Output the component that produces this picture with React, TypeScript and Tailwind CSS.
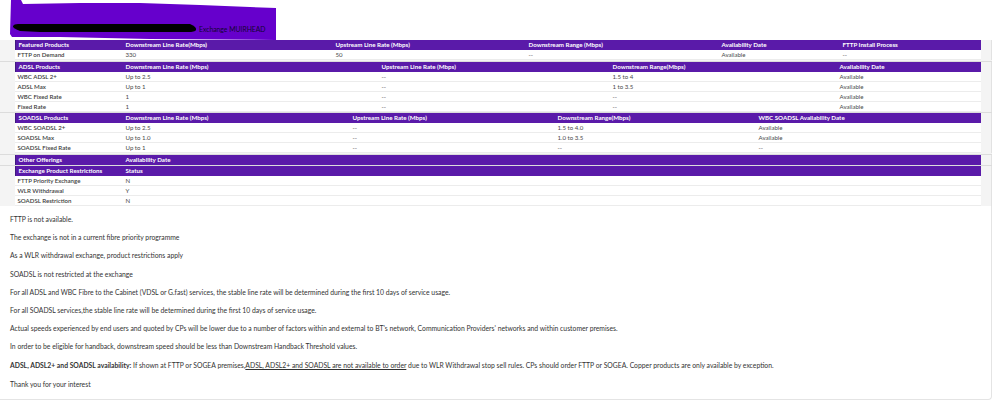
const font = { fontFamily: '"Lato", "Liberation Sans", sans-serif' };

type Row = string[];

function Section({ cols, head, rows, gap }: { cols: string; head: Row; rows: Row[]; gap: string }) {
  return (
    <div className={`flex bg-[#f4f4f4] ${gap}`}>
      <div className="w-[15px] shrink-0" />
      <div className="flex-1 min-w-0">
        <div className={`grid ${cols} h-[10px] items-center bg-[#5a1aa9] border-l border-[#3f1a80] text-white font-bold text-[6.2px] leading-none pl-[2.5px]`}>
          {head.map((h, i) => (
            <div key={i} className="whitespace-nowrap">{h}</div>
          ))}
        </div>
        {rows.map((r, i) => (
          <div key={i} className={`grid ${cols} h-[10px] pt-px items-center bg-white border-b border-[#ececec] text-[#4a4a4a] text-[6.1px] leading-none pl-[2.5px]`}>
            {r.map((c, j) => (
              <div key={j} className={j === 0 ? "whitespace-nowrap font-semibold text-[#3c3c3c]" : "whitespace-nowrap pl-px"}>{c}</div>
            ))}
          </div>
        ))}
      </div>
      <div className="w-[11px] shrink-0 border-r border-[#e2e2e2]" />
    </div>
  );
}

const notes = [
  "FTTP is not available.",
  "The exchange is not in a current fibre priority programme",
  "As a WLR withdrawal exchange, product restrictions apply",
  "SOADSL is not restricted at the exchange",
  "For all ADSL and WBC Fibre to the Cabinet (VDSL or G.fast) services, the stable line rate will be determined during the first 10 days of service usage.",
  "For all SOADSL services,the stable line rate will be determined during the first 10 days of service usage.",
  "Actual speeds experienced by end users and quoted by CPs will be lower due to a number of factors within and external to BT's network, Communication Providers' networks and within customer premises.",
  "In order to be eligible for handback, downstream speed should be less than Downstream Handback Threshold values.",
];

export default function App() {
  return (
    <div className="w-[999px] h-[405px] bg-white overflow-hidden text-[#333]" style={font}>
      <div className="relative h-[40px] w-[992px]">
        <svg className="absolute left-0 top-0" width="290" height="41" viewBox="0 0 290 41">
          <path d="M11 0 L21 0 L23 4 L80 3 L140 3 L200 5 L276 8 L276 40 L150 39 L60 37 L12 37 L10 34 Z" fill="#6600cc" />
          <path d="M18 24 L60 24 L120 24 L190 24 Q197 27 196 30 Q195 32 188 32 L100 32 L40 32 L20 31 Q12 28 13 26 Q14 24 18 24 Z" fill="#000" />
        </svg>
        <span className="absolute left-[199px] top-[25px] text-[6.8px] leading-[8px] text-[#12062e]">Exchange MUIRHEAD</span>
      </div>

      <div className="w-[992px]">
        <Section
          gap="pb-px border-b border-[#dcdcdc]"
          cols="grid-cols-[107px_210px_193px_193px_121px_1fr]"
          head={["Featured Products", "Downstream Line Rate(Mbps)", "Upstream Line Rate (Mbps)", "Downstream Range (Mbps)", "Availability Date", "FTTP Install Process"]}
          rows={[["FTTP on Demand", "330", "50", "--", "Available", "--"]]}
        />
        <Section
          gap="border-b border-[#dcdcdc]"
          cols="grid-cols-[107px_256px_231px_227px_1fr]"
          head={["ADSL Products", "Downstream Line Rate (Mbps)", "Upstream Line Rate (Mbps)", "Downstream Range(Mbps)", "Availability Date"]}
          rows={[
            ["WBC ADSL 2+", "Up to 2.5", "--", "1.5 to 4", "Available"],
            ["ADSL Max", "Up to 1", "--", "1 to 3.5", "Available"],
            ["WBC Fixed Rate", "1", "--", "--", "Available"],
            ["Fixed Rate", "1", "--", "--", "Available"],
          ]}
        />
        <Section
          gap="pb-px border-b border-[#dcdcdc]"
          cols="grid-cols-[107px_227px_205px_201px_1fr]"
          head={["SOADSL Products", "Downstream Line Rate (Mbps)", "Upstream Line Rate (Mbps)", "Downstream Range(Mbps)", "WBC SOADSL Availability Date"]}
          rows={[
            ["WBC SOADSL 2+", "Up to 2.5", "--", "1.5 to 4.0", "Available"],
            ["SOADSL Max", "Up to 1.0", "--", "1.0 to 3.5", "Available"],
            ["SOADSL Fixed Rate", "Up to 1", "--", "--", "--"],
          ]}
        />
        <Section gap="border-b border-[#dcdcdc]" cols="grid-cols-[107px_1fr]" head={["Other Offerings", "Availability Date"]} rows={[]} />
        <Section
          gap=""
          cols="grid-cols-[107px_1fr]"
          head={["Exchange Product Restrictions", "Status"]}
          rows={[
            ["FTTP Priority Exchange", "N"],
            ["WLR Withdrawal", "Y"],
            ["SOADSL Restriction", "N"],
          ]}
        />
      </div>

      <div className="w-[992px] h-[194px] pl-[10px] pt-[8px] border-r border-b border-[#e4e4e4] rounded-br-sm text-[6.8px] leading-[10px] text-[#333] flex flex-col">
        {notes.map((n) => (
          <p key={n} className="h-[18.2px] shrink-0 whitespace-nowrap">{n}</p>
        ))}
        <p className="h-[19.8px] shrink-0 whitespace-nowrap">
          <strong>ADSL, ADSL2+ and SOADSL availability:</strong> If shown at FTTP or SOGEA premises,<span className="underline">ADSL, ADSL2+ and SOADSL are not available to order</span> due to WLR Withdrawal stop sell rules. CPs should order FTTP or SOGEA. Copper products are only available by exception.
        </p>
        <p className="whitespace-nowrap">Thank you for your interest</p>
      </div>
    </div>
  );
}
